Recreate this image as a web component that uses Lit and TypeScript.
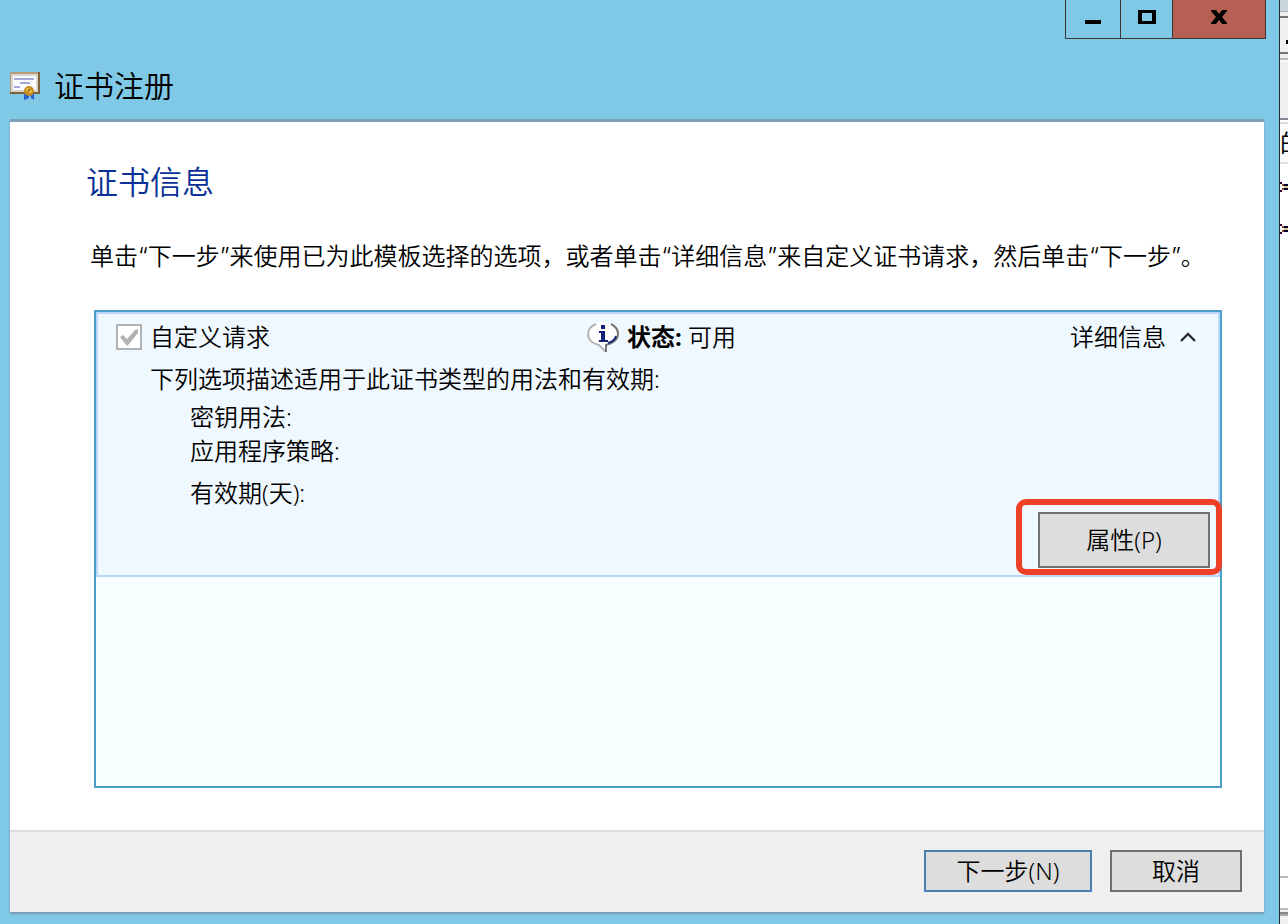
import { LitElement, html, css } from "lit";
import { customElement, state } from "lit/decorators.js";

@customElement("background-sliver")
class BackgroundSliver extends LitElement {
  static styles = css`
    :host {
      display: flex;
      flex-direction: column;
      width: 8px;
      overflow: hidden;
      background: #fff;
    }
    * { box-sizing: border-box; }
    .title { height: 12px; background: #c7d5dd; border-bottom: 1px solid #a9aeb2; }
    .frame { height: 4px; background: #efefef; }
    .toolbar { height: 38px; background: #f0f0f0; border: solid #757575; border-width: 2px 0; }
    .dot { width: 2px; height: 4px; margin: 22px 0 0 6px; background: #000; }
    .panel { height: 66px; padding-top: 4px; background: #efefef; border-bottom: 2px solid #85858f; }
    .rule { height: 4px; background: #b8b8b8; border-bottom: 2px solid #f7f7ff; }
    .header {
      height: 42px;
      margin-top: 2px;
      border: solid #dedede;
      border-width: 2px 0;
      background: #fcfcfc;
      font: 24px/36px "Noto Sans CJK SC", sans-serif;
      white-space: nowrap;
    }
    .rows { flex: 1; padding-top: 18px; display: flex; flex-direction: column; gap: 32px; }
    .rows svg { display: block; width: 8px; height: 10px; }
    .status { height: 34px; border: solid #bbb; border-width: 2px 0; }
    .edge { height: 4px; background: #f0f0f0; border-bottom: 2px solid #868686; }
    .base { height: 10px; background: #f0f0f0; border-top: 2px solid #aaa; }
  `;

  render() {
    const mark = html`<svg viewBox="0 0 8 10" aria-hidden="true">
      <path d="M0 0h2v2H0zM0 8h2v2H0z" fill="#300038" />
      <path d="M2 2h2v2H2zM2 6h2v2H2z" fill="#8a4a25" />
      <path d="M4 2h4v2H4zM4 6h4v2H4z" fill="#000030" />
      <path d="M4 4h4v2H4z" fill="#e6c68e" />
    </svg>`;
    return html`
      <div class="title"></div>
      <div class="frame"></div>
      <div class="toolbar"><div class="dot"></div></div>
      <div class="panel"><div class="rule"></div></div>
      <div class="header">的</div>
      <div class="rows">${mark}${mark}</div>
      <div class="status"></div>
      <div class="edge"></div>
      <div class="base"></div>
    `;
  }
}

@customElement("app-root")
class AppRoot extends LitElement {
  @state() private expanded = true;

  static styles = css`
    :host {
      display: grid;
      grid-template-columns: minmax(0, 1fr) auto;
      min-height: 100vh;
      font: 350 24px/32px "Noto Sans", "Noto Sans CJK SC", sans-serif;
      color: #000;
    }
    * { box-sizing: border-box; }
    svg { display: block; }
    h1, h2, p { margin: 0; font-weight: inherit; }
    button { font: inherit; color: inherit; border-radius: 0; padding: 0; margin: 0; }

    .window {
      display: flex;
      flex-direction: column;
      background: #7fc8e6;
      border-right: 1px solid #222b30;
      padding-bottom: 12px;
    }
    .captions { display: flex; justify-content: flex-end; margin-right: 13px; }
    .caption {
      display: flex;
      align-items: flex-start;
      justify-content: center;
      height: 39px;
      width: 55px;
      padding-top: 10px;
      background: none;
      border: solid #3c3434;
      border-width: 0 0 1px 1px;
    }
    .maximize { width: 52px; }
    .close { width: 94px; background: #b56052; border-right-width: 1px; }
    .titlebar { display: flex; align-items: center; gap: 14px; height: 80px; padding: 14px 10px 0; }
    .titlebar h1 { font-size: 30px; line-height: 40px; }

    .client {
      flex: 1;
      display: flex;
      flex-direction: column;
      margin: 0 15px 0 10px;
      border-top: 3px solid #7f9fb7;
      background: #fff;
      box-shadow: 0 2px 2px #7b98b0;
    }
    .page { flex: 1; display: flex; flex-direction: column; padding: 39px 42px 42px 76px; }
    .page h2 { font-size: 32px; line-height: 42px; color: #0a3296; }
    .intro { margin: 38px 0 37px 4px; font-family: "Inter", "Noto Sans CJK SC", sans-serif; }

    .list {
      flex: 1;
      margin-left: 8px;
      border: 2px solid #4d9fcb;
      background: #f7ffff;
    }
    .item {
      border: 2px solid #bbd6fb;
      background: #f0f8ff;
      padding: 7px 8px;
    }
    .summary { display: grid; grid-template-columns: 471px 1fr auto; align-items: center; padding: 0 14px 0 10px; }
    .choice, .state, .details { display: flex; align-items: center; gap: 8px; }
    .check { display: grid; margin-left: 0; }
    .check input, .check svg { grid-area: 1 / 1; }
    .check input {
      appearance: none;
      width: 26px;
      height: 26px;
      margin: 0;
      background: #fff;
      border: 2px solid #b0b2b4;
    }
    .details { border: 0; background: none; gap: 14px; }
    .options { padding-left: 44px; }
    .options p { margin-top: 10px; }
    .options dl { margin: 5px 0 0; padding-left: 40px; }
    .options dt { line-height: 34px; }
    .validity { margin-top: 8px; }
    .actions { display: flex; justify-content: flex-end; margin-top: 2px; }
    .push {
      height: 42px;
      border: 2px solid #707070;
      background: #ddd;
    }
    .properties { position: relative; }
    .properties .push { width: 172px; height: 56px; display: block; }
    .callout {
      position: absolute;
      inset: -13px -12px -7px -22px;
      border: 6px solid #ee4026;
      border-radius: 10px;
      pointer-events: none;
    }

    .footer {
      display: flex;
      justify-content: flex-end;
      gap: 18px;
      height: 82px;
      padding: 18px 22px 0;
      border-top: 2px solid #dedede;
      background: #efefef;
    }
    .next { width: 168px; border-color: #4a7fb2; }
    .cancel { width: 132px; }
  `;

  render() {
    return html`
      <main class="window">
        <div class="captions">
          <button class="caption" aria-label="最小化">
            <svg width="16" height="14" viewBox="0 0 16 14"><path d="M0 10h16v4H0z" /></svg>
          </button>
          <button class="caption maximize" aria-label="最大化">
            <svg width="18" height="14" viewBox="0 0 18 14"><path fill-rule="evenodd" d="M0 0h18v14H0zM4 3v8h10V3z" /></svg>
          </button>
          <button class="caption close" aria-label="关闭">
            <svg width="16" height="14" viewBox="0 0 16 14"><path d="M0 0h5l3 4 3-4h5v1l-5 6 5 6v1h-5l-3-4-3 4H0v-1l5-6-5-6z" /></svg>
          </button>
        </div>
        <header class="titlebar">
          <svg width="30" height="28" viewBox="0 0 30 28" aria-hidden="true">
            <path d="M0 0h30v22H0z" fill="#7c603e" />
            <path d="M0 0h28v20H0z" fill="#b39a78" />
            <path d="M1 2h27v18H1z" fill="#d8d4ce" />
            <path d="M3 4h23v14H3z" fill="#fbfbfd" />
            <path d="M4 6h20v2H4zM10 10h10v2H10zM4 14h6v2H4z" fill="#a5a8d5" />
            <path d="M14 22h5v4l-2 1-3 1zM20 22h4v6l-3-2z" fill="#295fd0" />
            <circle cx="19" cy="19" r="5" fill="#c78d20" />
            <path d="M16 16h4v2h2v3h-3v-2h-3z" fill="#e9b940" />
            <circle cx="19" cy="18" r="1" fill="#7b5620" />
          </svg>
          <h1>证书注册</h1>
        </header>
        <section class="client">
          <div class="page">
            <h2>证书信息</h2>
            <p class="intro">单击“下一步”来使用已为此模板选择的选项，或者单击“详细信息”来自定义证书请求，然后单击“下一步”。</p>
            <div class="list">
              <article class="item">
                <div class="summary">
                  <div class="choice">
                    <span class="check">
                      <input id="custom" type="checkbox" checked disabled />
                      <svg width="26" height="26" viewBox="0 0 26 26" aria-hidden="true">
                        <path d="M4 13l3-2 4 4 8-9 3-1v4L13 20l-2 2z" fill="#b0b2b4" />
                      </svg>
                    </span>
                    <label for="custom">自定义请求</label>
                  </div>
                  <div class="state">
                    <svg width="32" height="32" viewBox="0 0 32 32" aria-hidden="true">
                      <path d="M16 1C7 1 1 6 1 13c0 6 5 10 11 11l7 7v-7c7-1 12-5 12-11C31 6 25 1 16 1z" fill="#fff" />
                      <path d="M9 3C4 5 1 8 1 13c0 6 5 10 11 11l7 7" fill="none" stroke="#b4b4b4" stroke-width="2" />
                      <path d="M24 3c4 2 7 5 7 10 0 5-4 9-12 11v7" fill="none" stroke="#777" stroke-width="2" />
                      <path d="M29 15c-1 4-4 6-8 7" fill="none" stroke="#17277a" stroke-width="2" />
                      <path d="M14 4h4v4h-4zM12 10h6v9h3v2h-9v-2h2v-7h-2z" fill="#122078" />
                    </svg>
                    <span><b>状态:</b> 可用</span>
                  </div>
                  <button class="details" aria-expanded=${this.expanded} @click=${() => (this.expanded = !this.expanded)}>
                    详细信息
                    <svg width="16" height="12" viewBox="0 0 16 12" aria-hidden="true">
                      <path d="M1 10l7-7 7 7" fill="none" stroke="#2c2c2c" stroke-width="2.4" />
                    </svg>
                  </button>
                </div>
                ${this.expanded
                  ? html`
                      <div class="options">
                        <p>下列选项描述适用于此证书类型的用法和有效期:</p>
                        <dl>
                          <dt>密钥用法:</dt>
                          <dt>应用程序策略:</dt>
                          <dt class="validity">有效期(天):</dt>
                        </dl>
                      </div>
                      <div class="actions">
                        <div class="properties">
                          <button class="push">属性(P)</button>
                          <span class="callout"></span>
                        </div>
                      </div>
                    `
                  : ""}
              </article>
            </div>
          </div>
          <footer class="footer">
            <button class="push next">下一步(N)</button>
            <button class="push cancel">取消</button>
          </footer>
        </section>
      </main>
      <background-sliver aria-hidden="true"></background-sliver>
    `;
  }
}
